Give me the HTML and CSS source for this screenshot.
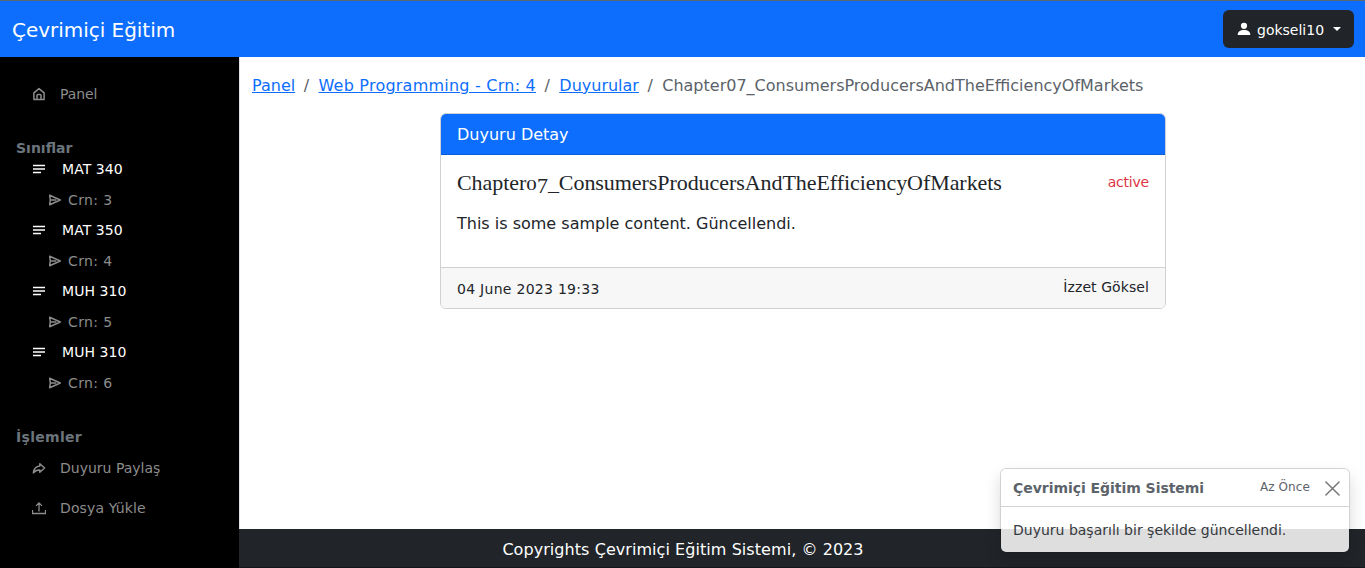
FILE: index.html
```html
<!DOCTYPE html>
<html lang="tr">
<head>
<meta charset="utf-8">
<title>Çevrimiçi Eğitim</title>
<link rel="stylesheet" href="styles.css">
</head>
<body>
<svg class="sprite" aria-hidden="true">
  <symbol id="lines" viewBox="0 0 14 14"><path d="M1 3.500h12M1 7h12M1 10.500h8" stroke="currentColor" stroke-width="1.400" fill="none"/></symbol>
  <symbol id="send" viewBox="0 0 14 14"><path d="M1.700 2.300 12.300 7 1.700 11.700 2.300 7ZM2.300 7h6" stroke="currentColor" stroke-width="1.500" stroke-linejoin="round" fill="none"/></symbol>
</svg>
<header class="navbar">
  <a class="brand">Çevrimiçi Eğitim</a>
  <button class="user">
    <svg class="user-icon" viewBox="0 0 14 14"><circle cx="7" cy="3.800" r="3.100" fill="currentColor"/><path d="M.7 13c0-3.300 2.300-5 6.300-5s6.300 1.700 6.300 5z" fill="currentColor"/></svg>
    <span class="user-name">gokseli10</span><i class="caret"></i>
  </button>
</header>
<div class="shell">
  <nav class="sidebar">
    <a class="link home"><svg class="icon" viewBox="0 0 14 14"><path d="M1.900 12.400V5.800L7 1.600l5.100 4.200v6.600ZM5 12V8.500q0-1 1-1h2q1 0 1 1V12" fill="none" stroke="currentColor" stroke-width="1.500" stroke-linejoin="round"/></svg><span>Panel</span></a>
    <h2 class="group">Sınıflar</h2>
    <a class="course"><svg class="icon"><use href="#lines"/></svg><span>MAT 340</span></a>
    <a class="crn"><svg class="icon"><use href="#send"/></svg><span>Crn: 3</span></a>
    <a class="course"><svg class="icon"><use href="#lines"/></svg><span>MAT 350</span></a>
    <a class="crn"><svg class="icon"><use href="#send"/></svg><span>Crn: 4</span></a>
    <a class="course"><svg class="icon"><use href="#lines"/></svg><span>MUH 310</span></a>
    <a class="crn"><svg class="icon"><use href="#send"/></svg><span>Crn: 5</span></a>
    <a class="course"><svg class="icon"><use href="#lines"/></svg><span>MUH 310</span></a>
    <a class="crn"><svg class="icon"><use href="#send"/></svg><span>Crn: 6</span></a>
    <h2 class="group actions">İşlemler</h2>
    <a class="link"><svg class="icon" viewBox="0 0 14 14"><path d="M7.800 2.700 12.600 7 7.800 11.200V8.900C4.700 8.800 3 9.600 1.400 11.900 1.800 7.900 4 5.300 7.800 5Z" fill="none" stroke="currentColor" stroke-width="1.500" stroke-linejoin="round"/></svg><span class="share">Duyuru Paylaş</span></a>
    <a class="link"><svg class="icon" viewBox="0 0 14 14"><path d="M.5 9v3.500h13V9M7 10.500V2M4 4.900l3-3 3 3" fill="none" stroke="currentColor" stroke-width="1.300"/></svg><span class="upload">Dosya Yükle</span></a>
  </nav>
  <div class="content">
    <main class="main">
      <div class="crumbs"><a>Panel</a><i>/</i><a class="crumb-course">Web Programming - Crn: 4</a><i>/</i><a>Duyurular</a><i>/</i><span>Chapter07_ConsumersProducersAndTheEfficiencyOfMarkets</span></div>
      <article class="card">
        <div class="card-head">Duyuru Detay</div>
        <div class="card-body">
          <div class="title-row"><h1 class="title">Chapter<span class="digit-small">0</span><span class="digit-low">7</span>_ConsumersProducersAndTheEfficiencyOfMarkets</h1><span class="status">active</span></div>
          <p class="text">This is some sample content. Güncellendi.</p>
        </div>
        <div class="card-foot"><span class="date">04 June 2023 19:33</span><span class="author">İzzet Göksel</span></div>
      </article>
    </main>
    <footer class="footer"><span>Copyrights Çevrimiçi Eğitim Sistemi, © 2023</span></footer>
  </div>
</div>
<aside class="toast">
  <div class="toast-head"><strong>Çevrimiçi Eğitim Sistemi</strong><small>Az Önce</small><svg class="close" viewBox="0 0 16 16"><path d="m1 1 14 14M15 1 1 15" stroke="currentColor" stroke-width="1.600" stroke-linecap="round"/></svg></div>
  <div class="toast-body">Duyuru başarılı bir şekilde güncellendi.</div>
</aside>
</body>
</html>
```
FILE: styles.css
```css
* { box-sizing: border-box; }
body { margin: 0; height: 568px; overflow: hidden; display: flex; flex-direction: column; font: 16px/24px Verdana, "DejaVu Sans", sans-serif; color: #212529; background: #fff; white-space: nowrap; }
.sprite { display: none; }
.navbar { height: 57px; flex: none; display: flex; align-items: center; justify-content: space-between; padding: 0 11px 0 12px; background: #0d6efd; border-top: 1px solid #5f6870; color: #fff; }
.brand { font-size: 20px; line-height: 30px; letter-spacing: -.03px; padding-top: 1px; }
.user { width: 131px; height: 38px; margin-bottom: 1px; display: flex; align-items: center; padding: 2px 13px 0 14px; border: 0; border-radius: 6px; background: #212529; color: #fff; font: 14px/20px Verdana, "DejaVu Sans", sans-serif; }
.user-icon { width: 14px; height: 14px; margin: 0 6px 2px 0; }
.caret { margin-left: auto; margin-bottom: 2px; border: 4px solid transparent; border-top-color: #fff; border-bottom: 0; }
.shell { flex: 1; display: flex; min-height: 0; }
.sidebar { width: 239px; flex: none; background: #000; color: #8c8c8c; padding: 17px 0 0 16px; font-size: 14px; }
.icon { width: 14px; height: 14px; flex: none; }
.link { display: flex; align-items: center; height: 40px; padding-left: 16px; gap: 14px; }
.home { letter-spacing: -.1px; }
.upload { letter-spacing: .12px; }
.group { margin: 23px 0 0; height: 20px; font-size: 14px; line-height: 22px; color: #6c757d; }
.course, .crn { display: flex; align-items: center; }
.course { height: 24px; padding-left: 16px; gap: 16px; color: #fff; letter-spacing: .06px; }
.crn { height: 37px; padding-left: 32px; gap: 6px; letter-spacing: .4px; }
.group.actions { margin-top: 25px; height: 22px; letter-spacing: .3px; }
.content { flex: 1; min-width: 0; display: flex; flex-direction: column; border-left: 1px solid #dee2e6; }
.main { flex: 1; padding: 17px 12px 0; }
.crumbs { display: flex; height: 39px; color: #5b6269; }
.crumbs a { color: #0d6efd; text-decoration: underline; }
.crumbs .crumb-course { letter-spacing: .23px; }
.crumbs i { font-style: normal; width: 23.3px; padding-right: 1px; text-align: center; }
.card { width: 726px; height: 196px; margin-left: 188px; display: flex; flex-direction: column; border: 1px solid #d0d1d2; border-radius: 6px; overflow: hidden; }
.card-head { height: 41px; padding: 9px 16px 7px; background: #0d6efd; border-bottom: 1px solid #0b5ed7; color: #fff; }
.card-body { flex: 1; padding: 16px; }
.title-row { display: flex; justify-content: space-between; height: 32px; }
.title { margin: 0; font: 400 22px/24px Georgia, "Liberation Serif", serif; letter-spacing: -.06px; }
.title span { line-height: 0; }
.digit-small { display: inline-block; font-size: 15.5px; transform: scaleX(1.35); padding: 0 1.5px; }
.digit-low { vertical-align: -3px; }
.status { font-size: 14px; line-height: 23px; letter-spacing: -.2px; color: #dc3545; }
.text { margin: 9px 0 0; }
.card-foot { height: 41px; display: flex; justify-content: space-between; padding: 8px 16px; border-top: 1px solid #d0d1d2; background: #f7f7f7; font-size: 14px; }
.date { padding-top: 1px; letter-spacing: .28px; }
.author { line-height: 22px; letter-spacing: .08px; }
.footer { height: 39px; padding-top: 9px; padding-right: 238px; text-align: center; letter-spacing: .06px; background: #212529; color: #fff; border-bottom: 1px solid #15181b; margin-left: -1px; }
.toast { position: absolute; left: 1000px; top: 468px; width: 350px; height: 85px; border: 1px solid rgba(0,0,0,.175); border-radius: 6px; background: rgba(255,255,255,.85); background-clip: padding-box; box-shadow: 0 8px 16px rgba(0,0,0,.15); font-size: 14px; overflow: hidden; }
.toast-head { height: 38px; display: flex; align-items: center; padding: 1px 9px 0 12px; border-bottom: 1px solid #d2d3d4; color: #5c636a; background: rgba(255,255,255,.85); }
.toast-head strong { margin-right: auto; letter-spacing: -.04px; }
.toast-head small { font-size: 12px; line-height: 18px; padding-bottom: 3px; letter-spacing: .1px; }
.close { width: 15px; height: 15px; margin-left: 15px; color: #777; }
.toast-body { padding: 12px; line-height: 22px; color: #35393d; }
```
